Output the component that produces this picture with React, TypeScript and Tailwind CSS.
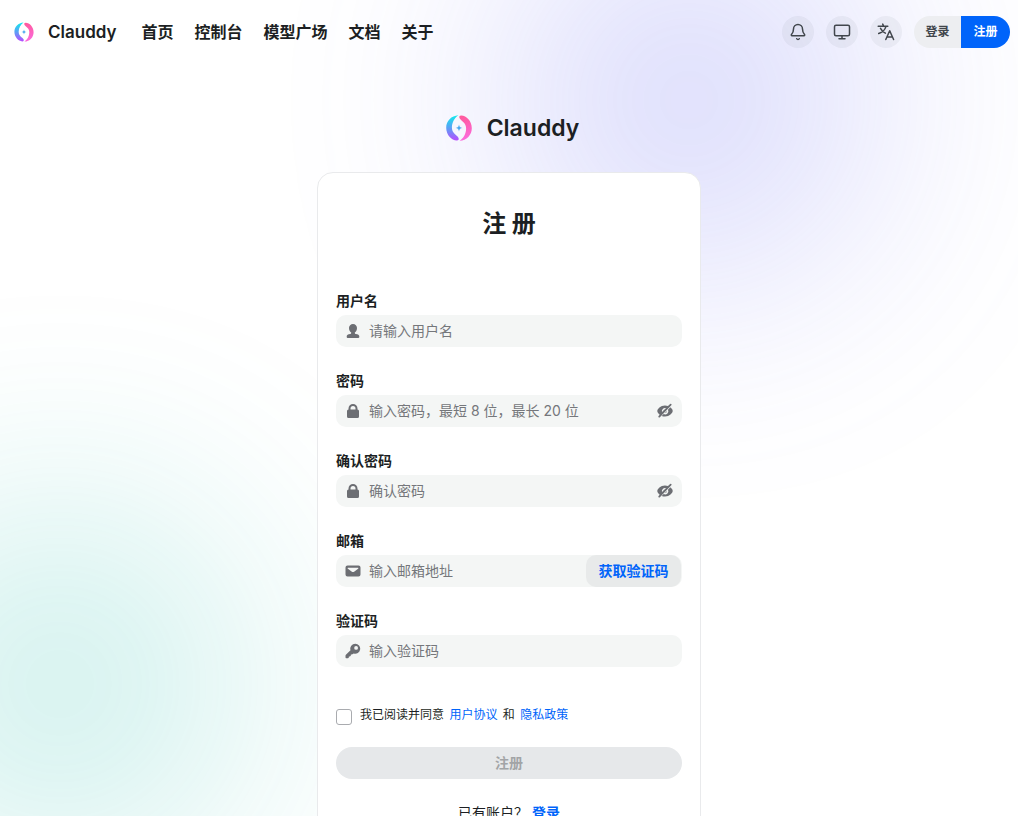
import React, { useState } from "react";

function Logo({ id, className }: { id: string; className: string }) {
  return (
    <svg viewBox="0 0 32 32" className={className} aria-hidden="true">
      <defs>
        <linearGradient id={`${id}-cool`} x1="0.6" y1="0" x2="0.6" y2="1">
          <stop offset="0" stopColor="#10ecec" />
          <stop offset="0.5" stopColor="#5aa0f5" />
          <stop offset="1" stopColor="#b84cff" />
        </linearGradient>
        <linearGradient id={`${id}-warm`} x1="0.4" y1="0" x2="0.5" y2="1">
          <stop offset="0" stopColor="#ff5a9c" />
          <stop offset="1" stopColor="#fb6bdf" />
        </linearGradient>
      </defs>
      <path
        fill={`url(#${id}-cool)`}
        d="M15.4 3.2C8.3 3.6 3.2 9 3.2 15.8c0 7.2 5.3 12.6 10.6 12.7 1.8 0 2.4-1.3 1.6-2.8C13.800 22.800 8.900 21.500 8.900 15.600 8.900 10.500 11.500 5.700 15.400 3.200Z"
      />
      <path
        fill={`url(#${id}-warm)`}
        d="M16.600 28.800C23.700 28.400 28.800 23 28.800 16.200c0-7.200-5.300-12.600-10.600-12.700-1.800 0-2.400 1.300-1.600 2.800 1.600 2.900 6.500 4.200 6.500 10.100 0 5.100-2.600 9.900-6.500 12.400Z"
      />
      <path
        fill="#4aa8ee"
        d="M16 12.600c.4 2.400 1 3 3.400 3.400-2.400.4-3 1-3.400 3.400-.4-2.400-1-3-3.400-3.400 2.400-.4 3-1 3.400-3.400Z"
      />
    </svg>
  );
}

function UserIcon() {
  return (
    <svg viewBox="0 0 16 16" className="size-4" fill="currentColor" aria-hidden="true">
      <path d="M8 1C5.700 1 4 2.700 4 5.100c0 1.900.9 3.700 2.200 4.500v.5c0 .6-.4.900-1 1-2.200.3-3.500 1-3.500 2.300v.7c0 .5.400.9.900.9h10.800c.5 0 .9-.4.9-.9v-.7c0-1.300-1.300-2-3.500-2.300-.6-.1-1-.4-1-1v-.5C11.100 8.800 12 7 12 5.100 12 2.700 10.300 1 8 1Z" />
    </svg>
  );
}

function LockIcon() {
  return (
    <svg viewBox="0 0 16 16" className="size-4" fill="currentColor" aria-hidden="true">
      <path
        fillRule="evenodd"
        d="M3.500 6.500V5.500a4.500 4.500 0 0 1 9 0v1A1.500 1.500 0 0 1 14 8v5.500a1.500 1.500 0 0 1-1.500 1.500h-9A1.500 1.500 0 0 1 2 13.500V8a1.500 1.500 0 0 1 1.500-1.500Zm2 0h5v-1a2.500 2.500 0 0 0-5 0v1Z"
      />
    </svg>
  );
}

function MailIcon() {
  return (
    <svg viewBox="0 0 16 16" className="size-4" fill="currentColor" aria-hidden="true">
      <path
        fillRule="evenodd"
        d="M2.500 2.500h11A2 2 0 0 1 15.500 4.500v7a2 2 0 0 1-2 2h-11a2 2 0 0 1-2-2v-7a2 2 0 0 1 2-2Zm.7 2.200c-.6 0-.8.700-.3 1.100l4 2.900c.7.500 1.500.5 2.200 0l4-2.900c.5-.4.300-1.100-.3-1.100H3.200Z"
      />
    </svg>
  );
}

function KeyIcon() {
  return (
    <svg viewBox="0 0 16 16" className="size-4" fill="currentColor" aria-hidden="true">
      <path
        fillRule="evenodd"
        d="M10.300.700a5 5 0 0 0-4.800 6.500L.9 11.800c-.3.300-.4.600-.4 1v1.500c0 .6.400 1 1 1h1.400c.5 0 .8-.3.900-.8l.1-.9 1-.1c.5-.1.800-.4.900-.9l.1-1 1-.1c.4 0 .7-.2.9-.4l1-.6a5 5 0 1 0 1.500-9.800Zm.8 2.300a1.900 1.900 0 1 1 0 3.800 1.900 1.900 0 0 1 0-3.800Z"
      />
    </svg>
  );
}

function EyeClosedIcon() {
  return (
    <svg viewBox="0 0 16 16" className="size-4" fill="currentColor" aria-hidden="true">
      <path d="M14.300.900a.9.900 0 0 0-1.200 0L11 3C10.100 2.700 9.100 2.500 8 2.500 3.500 2.500.3 6 .3 8c0 1.100.9 2.600 2.400 3.700l-1.100 1.200a.9.900 0 1 0 1.300 1.300L14.300 2.200a.9.900 0 0 0 0-1.300ZM9 5.100 7.700 6.400a1.700 1.700 0 0 0-1.400 1.400L5 9.100A3.200 3.200 0 0 1 9 5.100Z" />
      <path d="M13.200 4.300 11 6.700A3.200 3.200 0 0 1 6.700 11l-2 1.900c1 .4 2.100.6 3.300.6 4.500 0 7.700-3.500 7.700-5.500 0-1.100-.9-2.600-2.500-3.700Z" />
      <path d="M9.800 7.900 7.900 9.800A1.800 1.800 0 0 0 9.800 7.900Z" />
    </svg>
  );
}

function BellIcon() {
  return (
    <svg viewBox="0 0 24 24" className="size-[18px]" fill="none" stroke="currentColor" strokeWidth="2" strokeLinecap="round" strokeLinejoin="round" aria-hidden="true">
      <path d="M10.300 21a1.940 1.940 0 0 0 3.400 0" />
      <path d="M6 8a6 6 0 0 1 12 0c0 4.500 1.400 6 2.700 7.300A1 1 0 0 1 20 17H4a1 1 0 0 1-.7-1.700C4.600 14 6 12.500 6 8Z" />
    </svg>
  );
}

function MonitorIcon() {
  return (
    <svg viewBox="0 0 24 24" className="size-[18px]" fill="none" stroke="currentColor" strokeWidth="2" strokeLinecap="round" strokeLinejoin="round" aria-hidden="true">
      <rect x="2" y="3" width="20" height="14" rx="2" />
      <path d="M8 21h8M12 17v4" />
    </svg>
  );
}

function LanguageIcon() {
  return (
    <svg viewBox="0 0 18 18" className="size-[18px]" fill="none" stroke="currentColor" strokeWidth="1.500" strokeLinecap="round" strokeLinejoin="round" aria-hidden="true">
      <path d="M1.200 3.300h9.600M5.700 1.100l.6 1.200M8.900 3.600C8 6.700 5.300 9.300 1.700 10.500M3.500 5.300c1 2 2.600 3.700 4.900 4.800" />
      <path d="m8.800 16.500 3.900-8.800 3.900 8.800M10 13.900h5.400" />
    </svg>
  );
}

type FieldProps = {
  id: string;
  label: string;
  placeholder: string;
  icon: React.ReactNode;
  secret?: boolean;
  action?: React.ReactNode;
};

function Field({ id, label, placeholder, icon, secret = false, action }: FieldProps) {
  const [visible, setVisible] = useState(false);
  return (
    <div className="flex flex-col gap-1">
      <label htmlFor={id} className="text-sm leading-5 font-semibold">
        {label}
      </label>
      <div className="flex h-8 items-center rounded-[10px] bg-[#f4f6f5] text-[#6c6e73]">
        <span className="flex w-[33px] shrink-0 justify-center">{icon}</span>
        <input
          id={id}
          type={secret && !visible ? "password" : "text"}
          placeholder={placeholder}
          className="h-full min-w-0 flex-1 bg-transparent pb-0.5 text-sm text-[#1c1f23] outline-none placeholder:text-[#75777b]"
        />
        {secret && (
          <button
            type="button"
            aria-label="显示密码"
            onClick={() => setVisible(!visible)}
            className="flex w-[34px] shrink-0 justify-center"
          >
            <EyeClosedIcon />
          </button>
        )}
        {action}
      </div>
    </div>
  );
}

const navLinks = ["首页", "控制台", "模型广场", "文档", "关于"];
const roundButton =
  "flex size-8 items-center justify-center rounded-full bg-[#2e3238]/5 text-[#41464c]";

export default function App() {
  return (
    <div className="relative isolate min-h-screen overflow-hidden bg-white font-[Inter,'Noto_Sans_CJK_SC',sans-serif] text-[#1c1f23]">
      <div className="absolute -top-20 left-1/2 -z-10 size-[360px] rounded-full bg-[#6366f1] opacity-[0.26] blur-[120px]" />
      <div className="absolute top-[504px] -left-[120px] -z-10 size-[360px] rounded-full bg-[#14b8a6] opacity-[0.22] blur-[120px]" />

      <header className="flex h-16 items-center justify-between px-2">
        <div className="flex items-center gap-[25px]">
          <a href="#" className="flex items-center gap-3">
            <Logo id="header-logo" className="ml-1 size-6" />
            <span className="text-[17px] leading-7 font-semibold">Clauddy</span>
          </a>
          <nav className="flex gap-[21px] text-base leading-6 font-semibold">
            {navLinks.map((name) => (
              <a key={name} href="#">
                {name}
              </a>
            ))}
          </nav>
        </div>
        <div className="flex items-center gap-3">
          <button type="button" aria-label="通知" className={roundButton}>
            <BellIcon />
          </button>
          <button type="button" aria-label="主题" className={roundButton}>
            <MonitorIcon />
          </button>
          <button type="button" aria-label="语言" className={roundButton}>
            <LanguageIcon />
          </button>
          <div className="flex h-8 overflow-hidden rounded-full text-xs font-semibold">
            <button type="button" className="w-[47px] bg-[#edeef1] text-[#41464c]">
              登录
            </button>
            <button type="button" className="w-[49px] bg-[#0064fa] text-white">
              注册
            </button>
          </div>
        </div>
      </header>

      <main className="mx-auto w-full max-w-sm pt-12 pb-8">
        <div className="flex h-8 items-center justify-center gap-3 pl-1">
          <Logo id="form-logo" className="size-8" />
          <span className="text-[23px] leading-8 font-semibold">Clauddy</span>
        </div>

        <section className="mt-7 rounded-2xl border border-[#e9eaec] bg-white px-[18px] pt-[33px] pb-8">
          <h1 className="text-center text-2xl leading-9 font-bold">注 册</h1>
          <form className="mt-[49px]" onSubmit={(e) => e.preventDefault()}>
            <div className="flex flex-col gap-6">
              <Field id="username" label="用户名" placeholder="请输入用户名" icon={<UserIcon />} />
              <Field id="password" label="密码" placeholder="输入密码，最短 8 位，最长 20 位" icon={<LockIcon />} secret />
              <Field id="confirm" label="确认密码" placeholder="确认密码" icon={<LockIcon />} secret />
              <Field
                id="email"
                label="邮箱"
                placeholder="输入邮箱地址"
                icon={<MailIcon />}
                action={
                  <button
                    type="button"
                    className="mr-px h-full w-[95px] shrink-0 rounded-[10px] bg-[#e8eaea] text-sm font-semibold text-[#0064fa]"
                  >
                    获取验证码
                  </button>
                }
              />
              <Field id="code" label="验证码" placeholder="输入验证码" icon={<KeyIcon />} />
            </div>

            <div className="mt-[38px] flex h-5 items-start gap-2 text-xs leading-5">
              <input
                id="agree"
                type="checkbox"
                className="mt-1 size-4 shrink-0 appearance-none rounded-[3px] border border-[#a9abaf] bg-white checked:bg-[#0064fa]"
              />
              <div>
                <label htmlFor="agree">我已阅读并同意</label>{" "}
                <a href="#" className="mx-0.5 text-[#0064fa]">用户协议</a> 和{" "}
                <a href="#" className="mx-0.5 text-[#0064fa]">隐私政策</a>
              </div>
            </div>

            <button
              type="submit"
              disabled
              className="mt-[22px] h-8 w-full rounded-full bg-[#e6e8ea] text-sm font-semibold text-[#a2a4a6]"
            >
              注册
            </button>
          </form>
          <p className="mt-6 text-center text-sm leading-5">
            已有账户？{" "}
            <a href="#" className="font-semibold text-[#0064fa]">
              登录
            </a>
          </p>
        </section>
      </main>
    </div>
  );
}
